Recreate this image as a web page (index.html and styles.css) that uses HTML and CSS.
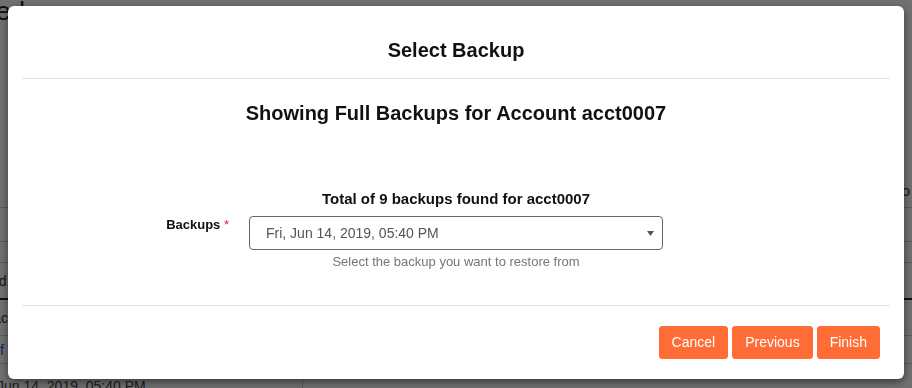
FILE: index.html
```html
<!DOCTYPE html>
<html lang="en">
<head>
<meta charset="utf-8">
<title>Select Backup</title>
<link rel="stylesheet" href="styles.css">
</head>
<body>
<div class="page">
  <div class="title-wrap"><h1 class="page-title">Backup Restore Wizard Completed</h1></div>
  <div class="bg-table">
    <div class="bg-row r1"><span class="cell-left"></span><span class="cell-right">Info</span></div>
    <div class="bg-row r2"></div>
    <div class="bg-row r3"></div>
    <div class="bg-row r4 thick"><span class="cell-left shift">Selected</span></div>
    <div class="bg-row r5"><span class="cell-left shift2">Backup</span></div>
    <div class="bg-row r6"><span class="cell-left link">f a</span></div>
    <div class="bg-row r7"><span class="cell-left date">Jun 14, 2019, 05:40 PM</span></div>
  </div>
</div>

<div class="backdrop">
  <div class="modal">
    <div class="modal-header">
      <h2 class="modal-title">Select Backup</h2>
    </div>
    <div class="modal-body">
      <h3 class="section-title">Showing Full Backups for Account acct0007</h3>
      <p class="total">Total of 9 backups found for acct0007</p>
      <div class="form-row">
        <label class="form-label">Backups <span class="req">*</span></label>
        <div class="field">
          <div class="select">
            <span class="select-value">Fri, Jun 14, 2019, 05:40 PM</span>
            <svg class="caret" width="7" height="5" viewBox="0 0 7 5"><path d="M0 0H7L3.5 5Z" fill="#555"/></svg>
          </div>
          <div class="help">Select the backup you want to restore from</div>
        </div>
        <div></div>
      </div>
    </div>
    <div class="modal-footer">
      <button class="btn">Cancel</button>
      <button class="btn">Previous</button>
      <button class="btn">Finish</button>
    </div>
  </div>
</div>
</body>
</html>
```

FILE: styles.css
```css
* { box-sizing: border-box; }
html, body { margin: 0; padding: 0; }
body {
  font-family: "Liberation Sans", Arial, sans-serif;
  background: #fff;
  color: #111;
  width: 912px;
  height: 388px;
  overflow: hidden;
}

/* background page */
.page { width: 912px; }
.title-wrap {
  display: flex;
  justify-content: flex-end;
  width: 25px;
  height: 174px;
  white-space: nowrap;
}
.page-title {
  margin: -4px 0 0 0;
  font-size: 26px;
  font-weight: normal;
  line-height: 30px;
  color: #222;
  flex: none;
}
.bg-row {
  display: flex;
  justify-content: space-between;
  align-items: center;
  border-bottom: 1px solid #d0d0d0;
  font-size: 14px;
  color: #333;
}
.r1 { height: 34px; }
.r2 { height: 34px; }
.r3 { height: 21px; }
.r4 { height: 37px; border-bottom: 2px solid #222; }
.r5 { height: 36px; }
.r6 { height: 28px; }
.r7 { height: 30px; border-bottom: none; }
.cell-right { margin-right: 2px; color: #1a3a6a; font-size: 15px; }
.shift { margin-left: -48px; }
.shift2 { margin-left: -16px; }
.link { margin-left: 0; color: #1565c0; }
.date {
  margin-left: -3px;
  width: 306px;
  height: 100%;
  display: flex;
  align-items: flex-end;
  border-right: 1px solid #d0d0d0;
  color: #444;
}

/* overlay */
.backdrop {
  position: fixed;
  inset: 0;
  background: rgba(0, 0, 0, 0.56);
  padding: 6px 8px;
}
.modal {
  width: 896px;
  background: #fff;
  border-radius: 6px;
  padding: 0 14px;
  box-shadow: 0 3px 9px rgba(0, 0, 0, 0.5);
}
.modal-header {
  padding: 32px 0 16px;
  border-bottom: 1px solid #e5e5e5;
  text-align: center;
}
.modal-title {
  margin: 0;
  font-size: 20px;
  line-height: 24px;
  font-weight: bold;
  color: #111;
}
.modal-body {
  padding: 22px 0 34px;
}
.section-title {
  margin: 0;
  text-align: center;
  font-size: 20px;
  line-height: 24px;
  font-weight: bold;
  color: #111;
}
.total {
  margin: 64px 0 0;
  text-align: center;
  font-size: 15px;
  line-height: 20px;
  font-weight: bold;
  color: #111;
}
.form-row {
  margin-top: 7px;
  display: grid;
  grid-template-columns: 1fr 414px 1fr;
  align-items: start;
}
.form-label {
  text-align: right;
  padding-right: 20px;
  font-size: 13px;
  line-height: 18px;
  font-weight: bold;
  color: #111;
}
.req { color: #d9272e; font-weight: normal; }
.select {
  height: 34px;
  border: 1px solid #666;
  border-radius: 4px;
  display: flex;
  align-items: center;
  justify-content: space-between;
  padding: 0 8px 0 16px;
}
.select-value {
  font-size: 14px;
  color: #555;
}
.caret { display: block; }
.help {
  margin-top: 3px;
  text-align: center;
  font-size: 13px;
  line-height: 18px;
  color: #767676;
}
.modal-footer {
  border-top: 1px solid #e5e5e5;
  padding: 20px 10px 20px 0;
  display: flex;
  justify-content: flex-end;
  gap: 4px;
}
.btn {
  height: 33px;
  padding: 0 12px;
  border: 1px solid #ff6c36;
  border-radius: 3px;
  background: #ff6c36;
  color: #fff;
  font-family: "Liberation Sans", Arial, sans-serif;
  font-size: 14px;
  line-height: 31px;
}
```
